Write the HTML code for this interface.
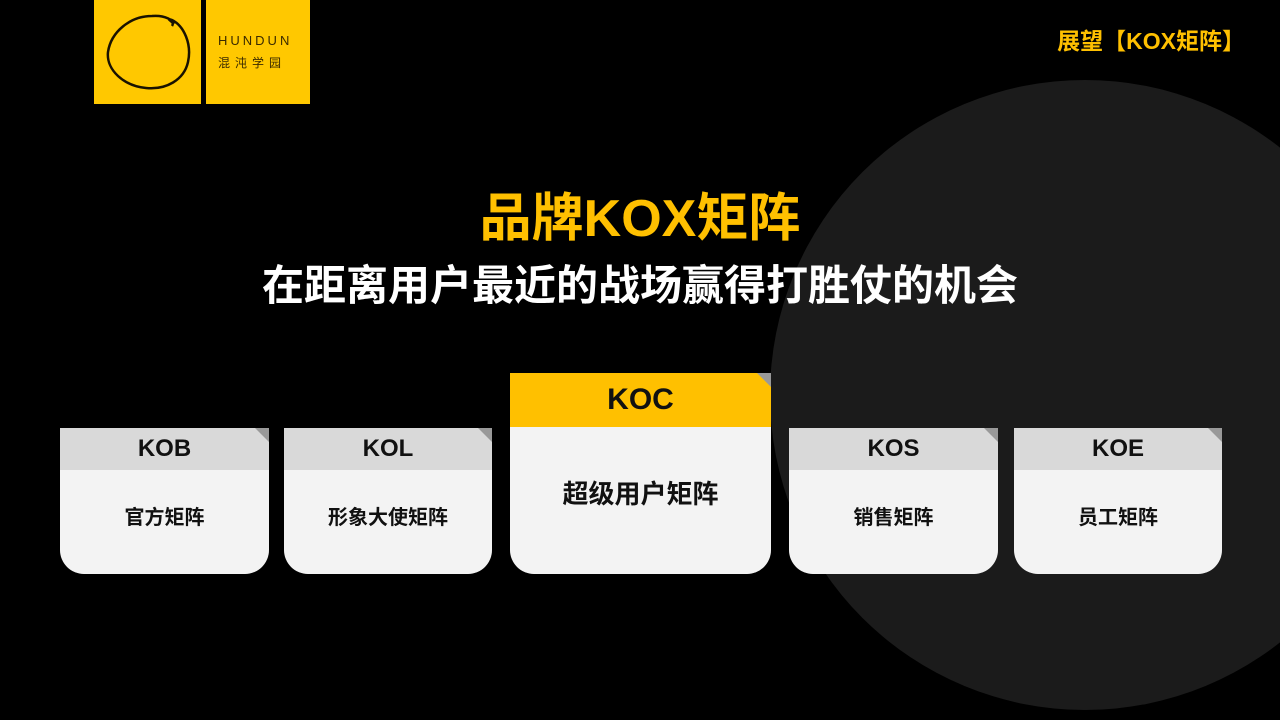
<!DOCTYPE html>
<html><head><meta charset="utf-8"><style>
body{margin:0;width:1280px;height:720px;background:#000;position:relative;overflow:hidden;font-family:"Liberation Sans","Noto Sans CJK SC",sans-serif}
.circ{position:absolute;left:770px;top:80px;width:630px;height:630px;border-radius:50%;background:#1b1b1b}
.logo{position:absolute;top:0;height:104px;background:#ffc800}
.t{position:absolute;width:1280px;text-align:center;font-weight:bold}
.card{position:absolute;background:#f3f3f3;border-radius:0 0 24px 24px;overflow:hidden}
.card .h{background:#d9d9d9;text-align:center;font-size:24px;font-weight:600;color:#111;position:relative}
.card .h:after{content:"";position:absolute;right:0;top:0;border-style:solid;border-width:0 14px 14px 0;border-color:transparent #999 transparent transparent}
.card .b{text-align:center;font-size:20px;font-weight:bold;color:#111}
</style></head><body>
<div class="circ"></div>
<div class="logo" style="left:94px;width:107px">
<svg width="107" height="104"><path d="M80 24 C76 20 72 18 78 20 C90 26 98 44 94 62 C90 80 72 90 52 88 C30 86 12 70 14 52 C17 32 36 16 58 16 C70 15 82 20 78 26" fill="none" stroke="#1a1200" stroke-width="2.5"/></svg>
</div>
<div class="logo" style="left:206px;width:104px">
<div style="position:absolute;left:12px;top:33px;font-size:13px;letter-spacing:3px;color:#3a2a00">HUNDUN</div>
<div style="position:absolute;left:12px;top:54px;font-size:12px;letter-spacing:5px;color:#3a2a00">混沌学园</div>
</div>
<div style="position:absolute;right:35px;top:22px;color:#ffc000;font-size:23px;font-weight:bold">展望【KOX矩阵】</div>
<div class="t" style="top:176px;font-size:52px;color:#ffc000">品牌KOX矩阵</div>
<div class="t" style="top:252px;font-size:42px;color:#fff">在距离用户最近的战场赢得打胜仗的机会</div>
<div class="card" style="left:60px;top:428px;width:209px;height:146px"><div class="h" style="height:42px;line-height:42px">KOB</div><div class="b" style="line-height:96px">官方矩阵</div></div>
<div class="card" style="left:284px;top:428px;width:208px;height:146px"><div class="h" style="height:42px;line-height:42px">KOL</div><div class="b" style="line-height:96px">形象大使矩阵</div></div>
<div class="card" style="left:510px;top:373px;width:261px;height:201px"><div class="h" style="height:54px;line-height:54px;background:#ffc000;font-size:30px">KOC</div><div class="b" style="line-height:134px;font-size:26px">超级用户矩阵</div></div>
<div class="card" style="left:789px;top:428px;width:209px;height:146px"><div class="h" style="height:42px;line-height:42px">KOS</div><div class="b" style="line-height:96px">销售矩阵</div></div>
<div class="card" style="left:1014px;top:428px;width:208px;height:146px"><div class="h" style="height:42px;line-height:42px">KOE</div><div class="b" style="line-height:96px">员工矩阵</div></div>
</body></html>
